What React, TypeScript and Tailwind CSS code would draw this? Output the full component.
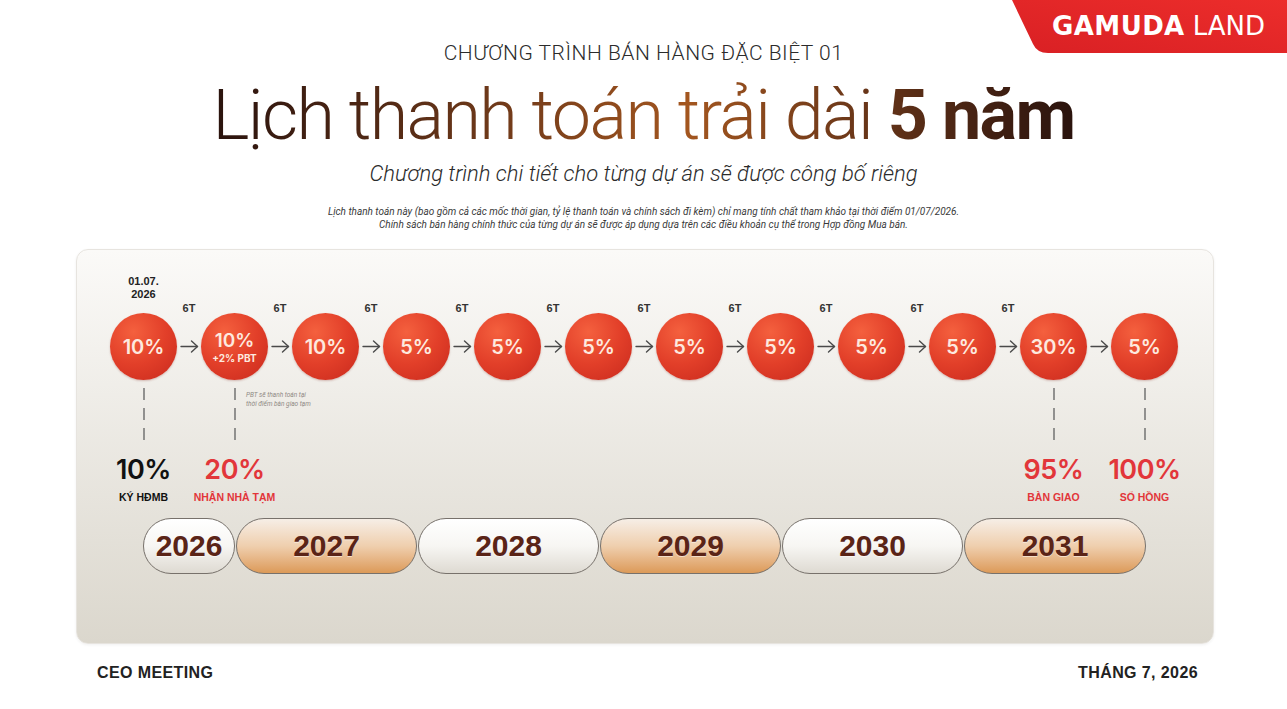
const amounts: { v: string; sub?: string }[] = [
  { v: "10%" },
  { v: "10%", sub: "+2% PBT" },
  { v: "10%" },
  { v: "5%" },
  { v: "5%" },
  { v: "5%" },
  { v: "5%" },
  { v: "5%" },
  { v: "5%" },
  { v: "5%" },
  { v: "30%" },
  { v: "5%" },
];

const milestones: Record<number, { v: string; label: string; red: boolean }> = {
  0: { v: "10%", label: "KÝ HĐMB", red: false },
  1: { v: "20%", label: "NHẬN NHÀ TẠM", red: true },
  10: { v: "95%", label: "BÀN GIAO", red: true },
  11: { v: "100%", label: "SỔ HỒNG", red: true },
};

const years = [
  { y: "2026", w: "w-[92px]", orange: false },
  { y: "2027", w: "w-[181px]", orange: true },
  { y: "2028", w: "w-[181px]", orange: false },
  { y: "2029", w: "w-[181px]", orange: true },
  { y: "2030", w: "w-[181px]", orange: false },
  { y: "2031", w: "w-[182px]", orange: true },
];

function Arrow() {
  return (
    <svg width="19" height="13" viewBox="0 0 19 13" fill="none" stroke="#4a4a4a" strokeWidth="1.4" strokeLinecap="round" strokeLinejoin="round" aria-hidden="true">
      <line x1="1" y1="6.5" x2="17.5" y2="6.5" />
      <polyline points="11.5 1 17.5 6.5 11.5 12" />
    </svg>
  );
}

function Dash() {
  return (
    <svg width="2" height="54" viewBox="0 0 2 54" aria-hidden="true">
      <line x1="1" y1="0" x2="1" y2="54" stroke="#6b6b6b" strokeWidth="1.4" strokeDasharray="12 8" />
    </svg>
  );
}

function Logo() {
  return (
    <div className="absolute right-0 top-0 h-[53px] w-[275px]">
      <svg className="absolute inset-0" width="275" height="53" viewBox="0 0 275 53" aria-hidden="true">
        <defs>
          <linearGradient id="lg" x1="0" y1="1" x2="1" y2="0">
            <stop offset="0" stopColor="#d92024" />
            <stop offset="1" stopColor="#ec2d2b" />
          </linearGradient>
        </defs>
        <path d="M0 0 H275 V53 H36 Q25 53 21 44 L0 0 Z" fill="url(#lg)" />
      </svg>
      <div className="relative flex h-full items-center justify-end pr-[22px] pb-[2px] font-['DejaVu_Sans',sans-serif] text-[26px] leading-none text-white">
        <span className="font-bold tracking-[0.4px]">GAMUDA</span>
        <span className="ml-[8px] font-normal">LAND</span>
      </div>
    </div>
  );
}

export default function App() {
  return (
    <div className="relative h-[709px] w-[1287px] overflow-hidden bg-white font-['Liberation_Sans',Arial,sans-serif]">
      <Logo />

      {/* ── Heading ── */}
      <div className="flex flex-col items-center text-center">
        <p className="mt-[41px] font-['Roboto',sans-serif] text-[21px] font-light leading-[24px] tracking-[0.5px] text-[#2b2b2b]">
          CHƯƠNG TRÌNH BÁN HÀNG ĐẶC BIỆT 01
        </p>
        <h1 className="mt-[14px] bg-linear-to-r from-[#2a130d] via-[#a3561f] via-55% to-[#2a130d] bg-clip-text font-['Roboto',sans-serif] text-[70px] font-light leading-[72px] tracking-[-1.6px] text-transparent">
          Lịch thanh toán trải dài <span className="font-bold">5 năm</span>
        </h1>
        <p className="mt-[10px] font-['Roboto',sans-serif] text-[22px] font-light italic leading-[26px] text-[#2b2b2b]">
          Chương trình chi tiết cho từng dự án sẽ được công bố riêng
        </p>
        <div className="mt-[18px] font-['Roboto',sans-serif] text-[10px] italic leading-[13px] text-[#3a3a3a]">
          <p>Lịch thanh toán này (bao gồm cả các mốc thời gian, tỷ lệ thanh toán và chính sách đi kèm) chỉ mang tính chất tham khảo tại thời điểm 01/07/2026.</p>
          <p>Chính sách bán hàng chính thức của từng dự án sẽ được áp dụng dựa trên các điều khoản cụ thể trong Hợp đồng Mua bán.</p>
        </div>
      </div>

      {/* ── Timeline panel ── */}
      <section className="ml-[76px] mt-[18px] h-[395px] w-[1138px] rounded-[12px] border border-[#e7e4df] bg-linear-to-b from-[#fbfaf8] to-[#dbd7cd] shadow-[0_1px_3px_rgba(0,0,0,0.06)]">
        <div className="ml-[21px] w-[1092px]">
          {/* circles + arrows */}
          <div className="flex pl-[12px]">
            {amounts.map((a, i) => (
              <div key={i} className="flex">
                <div className="flex w-[67px] flex-col items-center">
                  <div className="flex h-[63px] flex-col items-center justify-end pb-[12px]">
                    {i === 0 && (
                      <p className="text-center text-[11px] font-bold leading-[13px] text-[#222]">
                        01.07.
                        <br />
                        2026
                      </p>
                    )}
                  </div>
                  <div className="flex h-[67px] w-[67px] flex-col items-center justify-center rounded-full bg-[radial-gradient(circle_at_35%_28%,#f4603e_0%,#e23f29_50%,#c8291d_100%)] text-[#fde9df] shadow-[0_1px_2px_rgba(120,20,10,0.25)]">
                    <span className={`font-['Inter',sans-serif] font-semibold leading-none ${a.sub ? "text-[19px]" : "text-[20px]"}`}>{a.v}</span>
                    {a.sub && <span className="mt-[3px] font-['Inter',sans-serif] text-[10px] font-bold leading-none">{a.sub}</span>}
                  </div>
                </div>
                {i < amounts.length - 1 && (
                  <div className="flex w-[24px] flex-col items-center">
                    <div className="flex h-[63px] flex-col items-center justify-end">
                      {i < 10 && <span className="-mb-[1px] text-[11px] font-bold leading-none text-[#333]">6T</span>}
                    </div>
                    <div className="flex h-[67px] items-center justify-center">
                      <Arrow />
                    </div>
                  </div>
                )}
              </div>
            ))}
          </div>

          {/* dashed connectors */}
          <div className="mt-[8px] grid h-[54px] grid-cols-[repeat(12,91px)]">
            {amounts.map((_, i) => (
              <div key={i} className="relative flex justify-center">
                {milestones[i] && <Dash />}
                {i === 1 && (
                  <p className="absolute left-[57px] top-[3px] whitespace-nowrap font-['Roboto',sans-serif] text-[6.5px] italic leading-[9px] text-[#8f8a85]">
                    PBT sẽ thanh toán tại
                    <br />
                    thời điểm bàn giao tạm
                  </p>
                )}
              </div>
            ))}
          </div>

          {/* milestones */}
          <div className="mt-[14px] grid grid-cols-[repeat(12,91px)]">
            {amounts.map((_, i) => {
              const m = milestones[i];
              return (
                <div key={i} className="flex flex-col items-center">
                  {m && (
                    <>
                      <span className={`font-['Inter',sans-serif] text-[27px] font-semibold leading-[28px] tracking-[-0.5px] ${m.red ? "text-[#e2363a]" : "text-[#111]"}`}>
                        {m.v}
                      </span>
                      <span className={`mt-[7px] whitespace-nowrap text-[10.5px] font-bold leading-[12px] ${m.red ? "text-[#e2363a]" : "text-[#111]"}`}>
                        {m.label}
                      </span>
                    </>
                  )}
                </div>
              );
            })}
          </div>

          {/* years */}
          <div className="mt-[15px] flex gap-[1px] pl-[45px]">
            {years.map((y) => (
              <div
                key={y.y}
                className={`flex h-[56px] ${y.w} items-center justify-center rounded-full border border-[#77716b] ${
                  y.orange
                    ? "bg-linear-to-b from-[#f6eee6] via-[#efcfae] to-[#dc9a58]"
                    : "bg-linear-to-b from-[#ffffff] via-[#f7f6f3] to-[#dedad2]"
                }`}
              >
                <span className="text-[30px] font-bold leading-none text-[#5a2417] [text-shadow:0_1px_0_rgba(255,255,255,0.55)]">
                  {y.y}
                </span>
              </div>
            ))}
          </div>
        </div>
      </section>

      {/* ── Footer ── */}
      <footer className="mt-[20px] flex justify-between pl-[97px] pr-[89px] text-[16px] font-bold leading-[18px] tracking-[0.4px] text-[#222]">
        <span>CEO MEETING</span>
        <span>THÁNG 7, 2026</span>
      </footer>
    </div>
  );
}
